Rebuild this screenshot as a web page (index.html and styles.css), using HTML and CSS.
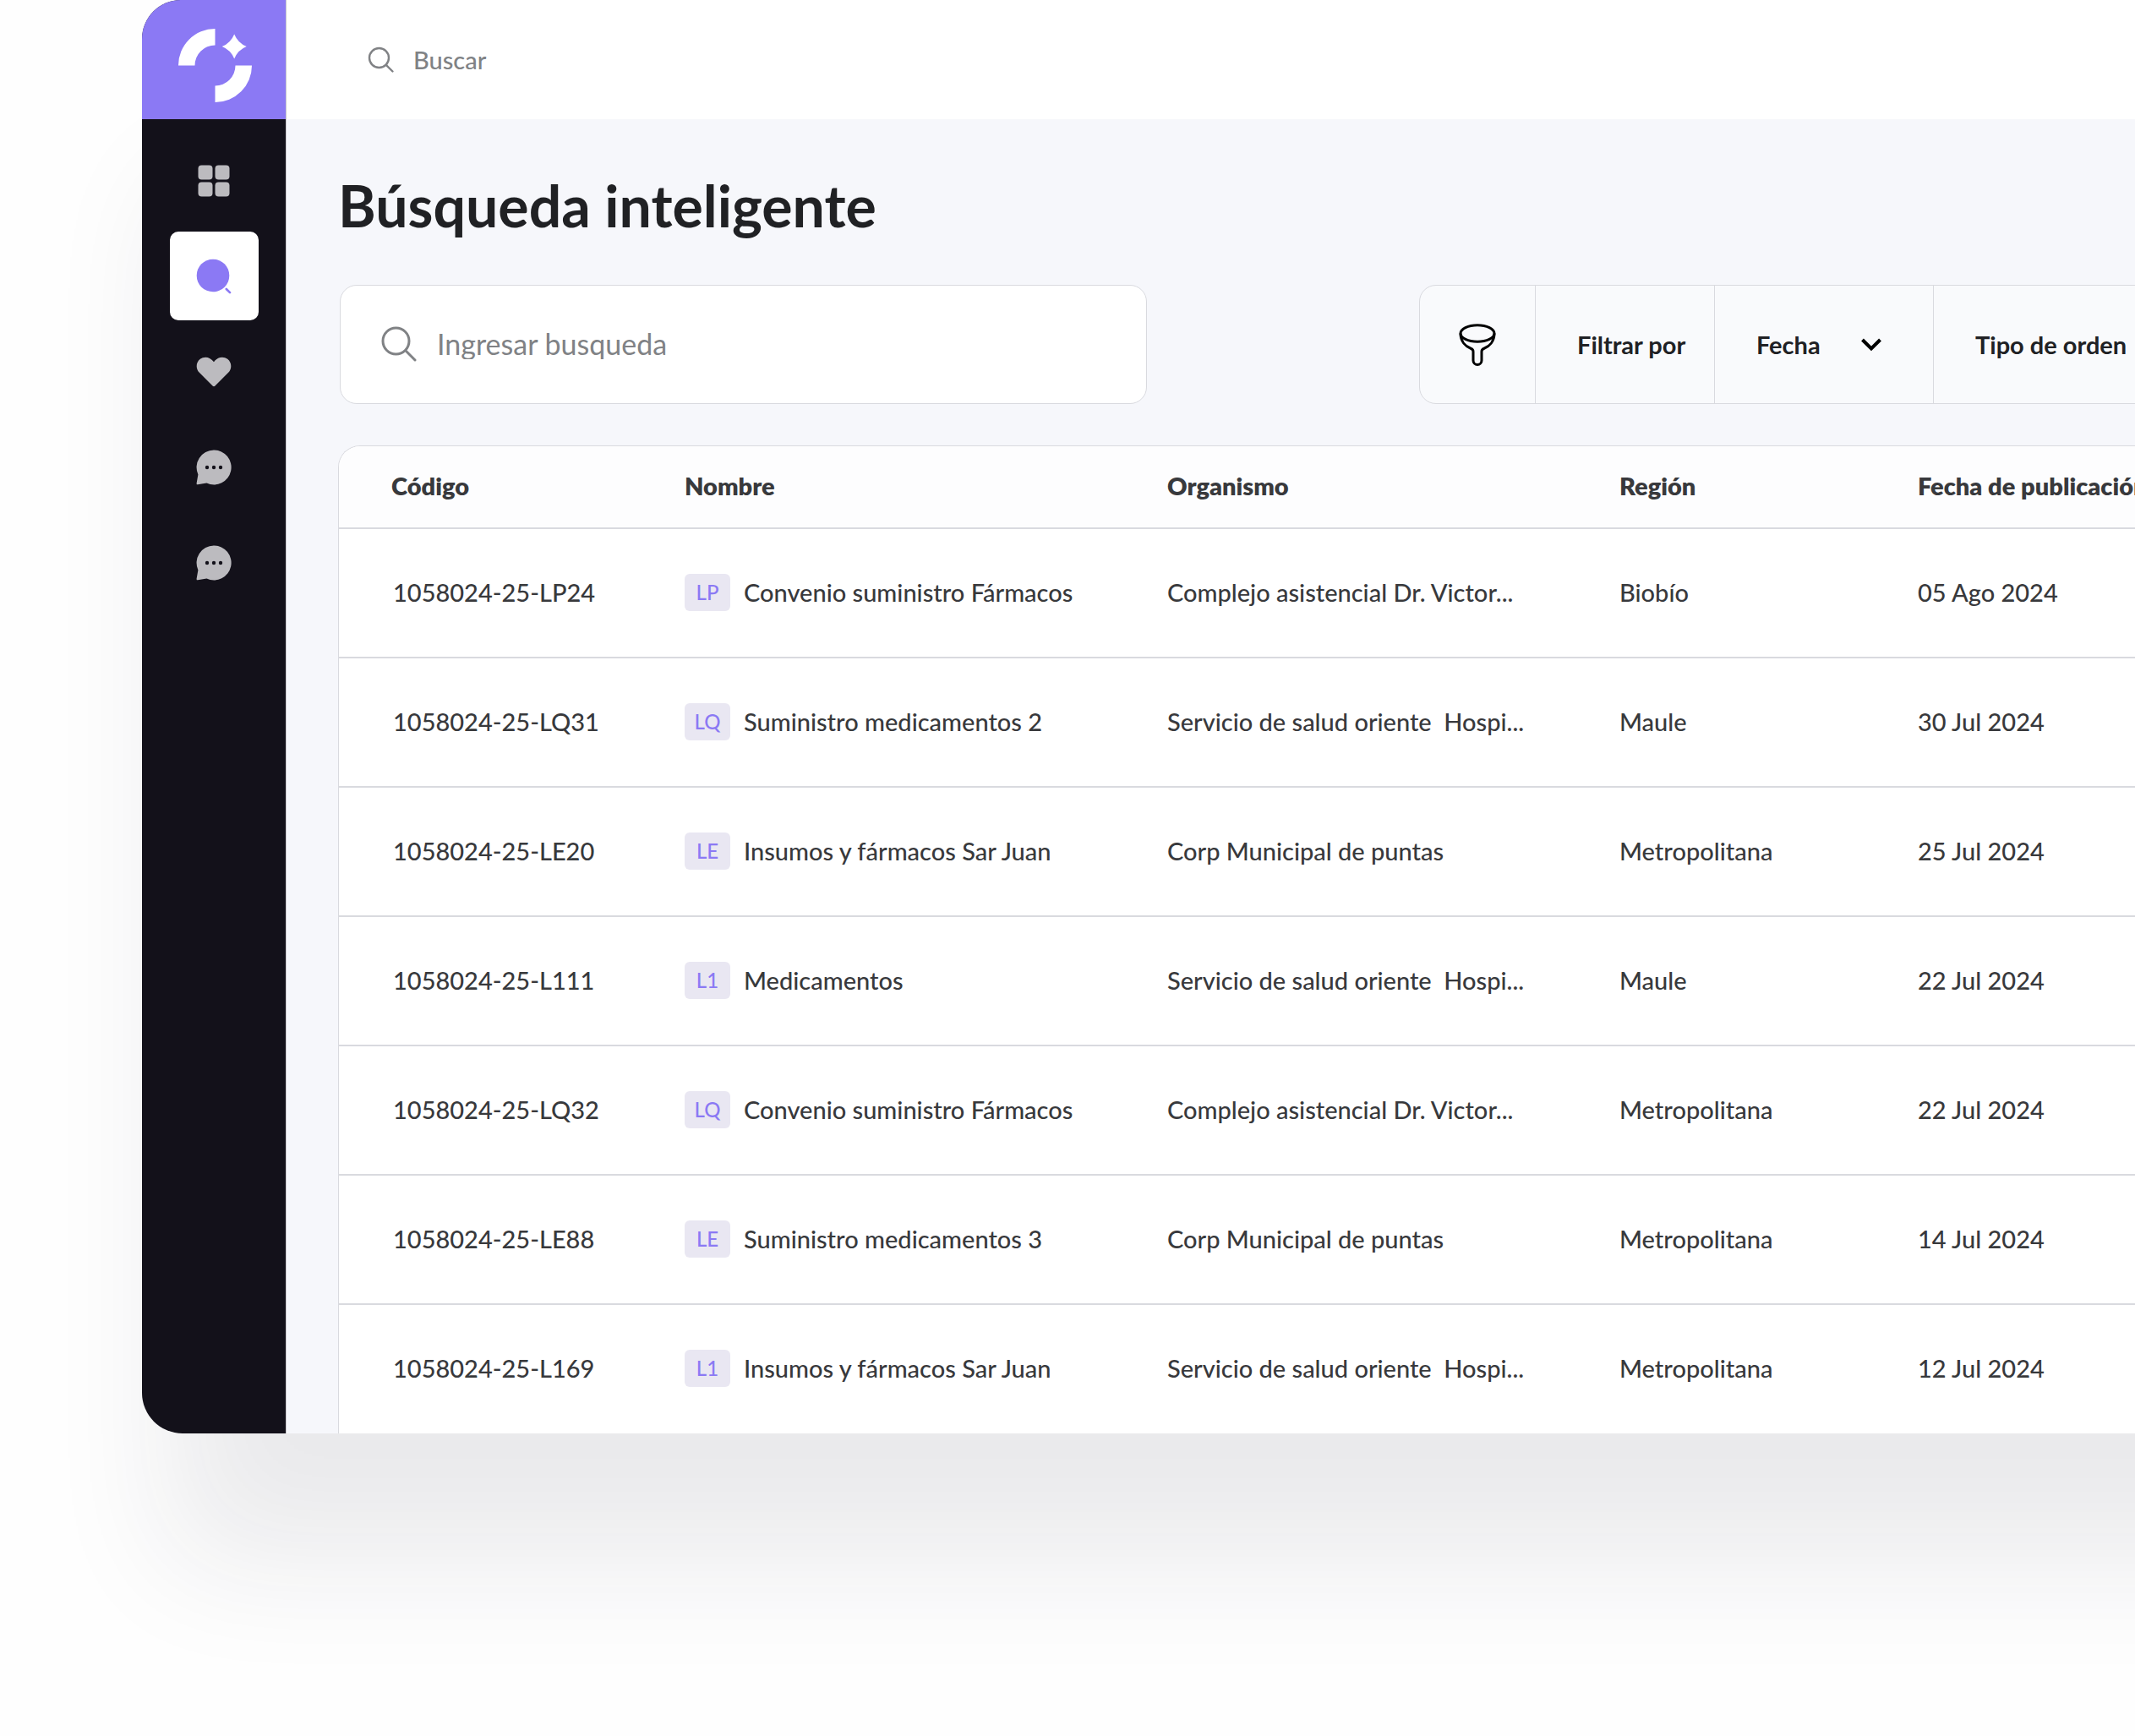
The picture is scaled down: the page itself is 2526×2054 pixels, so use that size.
FILE: index.html
```html
<!DOCTYPE html>
<html lang="es">
<head>
<meta charset="utf-8">
<meta name="viewport" content="width=device-width, initial-scale=1">
<title>Búsqueda inteligente</title>
<link rel="stylesheet" href="styles.css">
</head>
<body>
<div class="app">
  <aside class="sidebar">
    <a class="logo" href="#" aria-label="Inicio">
      <svg width="88" height="88" viewBox="0 0 88 88" fill="#fff" aria-hidden="true">
        <path d="M0 43.500A43.500 43.500 0 0 1 43.500 0V19.500A24 24 0 0 0 19.500 43.500Z"/>
        <path d="M87 43.500A43.500 43.500 0 0 1 43.500 87V67.500A24 24 0 0 0 67.500 43.500Z"/>
        <path d="M66.200 6.500Q70.500 17 80.700 21Q70.500 25 66.200 35.500Q61.900 25 51.700 21Q61.900 17 66.200 6.500Z"/>
      </svg>
    </a>
    <nav class="nav" aria-label="Principal">
      <a class="nav-item" href="#" aria-label="Panel">
        <svg width="42" height="42" viewBox="0 0 42 42" aria-hidden="true">
          <rect x="2.500" y="2.500" width="17" height="17" rx="4"/><rect x="22.500" y="2.500" width="17" height="17" rx="4"/>
          <rect x="2.500" y="22.500" width="17" height="17" rx="4"/><rect x="22.500" y="22.500" width="17" height="17" rx="4"/>
        </svg>
      </a>
      <a class="nav-item active" href="#" aria-label="Búsqueda" aria-current="page">
        <svg width="42" height="42" viewBox="0 0 42 42" aria-hidden="true">
          <circle cx="20" cy="20" r="19.300"/><path d="M35.800 36L40 40.200" stroke="currentColor" stroke-width="2.600" stroke-linecap="round"/>
        </svg>
      </a>
      <a class="nav-item" href="#" aria-label="Favoritos">
        <svg width="42" height="42" viewBox="0 0 42 42" aria-hidden="true">
          <path d="M21 9.300C16.800 3 9.500 2.200 4.800 5.800C-.5 10-.5 17.500 3.800 21.800L19.500 37.500Q21 39 22.500 37.500L38.200 21.800C42.500 17.500 42.500 10 37.200 5.800C32.500 2.200 25.200 3 21 9.300Z"/>
        </svg>
      </a>
      <a class="nav-item" href="#" aria-label="Mensajes">
        <svg width="42" height="42" viewBox="0 0 42 42" aria-hidden="true">
          <path d="M21 .5A20.500 20.500 0 1 1 12.500 39.600L2 41.300Q.4 41.400.6 39.800L2.400 29.500A20.500 20.500 0 0 1 21 .5Z"/>
          <g fill="#13111a"><circle cx="13" cy="21" r="2.200"/><circle cx="21" cy="21" r="2.200"/><circle cx="29" cy="21" r="2.200"/></g>
        </svg>
      </a>
      <a class="nav-item" href="#" aria-label="Chat">
        <svg width="42" height="42" viewBox="0 0 42 42" aria-hidden="true">
          <path d="M21 .5A20.500 20.500 0 1 1 12.500 39.600L2 41.300Q.4 41.400.6 39.800L2.400 29.500A20.500 20.500 0 0 1 21 .5Z"/>
          <g fill="#13111a"><circle cx="13" cy="21" r="2.200"/><circle cx="21" cy="21" r="2.200"/><circle cx="29" cy="21" r="2.200"/></g>
        </svg>
      </a>
    </nav>
  </aside>

  <div class="content">
    <header class="topbar">
      <label class="topbar-search">
        <svg width="32" height="32" viewBox="0 0 32 32" fill="none" stroke="currentColor" stroke-width="2.400" stroke-linecap="round" aria-hidden="true"><circle cx="13.500" cy="13.500" r="11.500"/><path d="M21.800 21.800L29.500 29.500"/></svg>
        <input class="field" type="search" placeholder="Buscar" aria-label="Buscar">
      </label>
    </header>

    <main class="main">
      <h1 class="title">Búsqueda inteligente</h1>

      <div class="toolbar">
        <label class="search-box">
          <svg width="42" height="42" viewBox="0 0 42 42" fill="none" stroke="currentColor" stroke-width="3" stroke-linecap="round" aria-hidden="true"><circle cx="17.500" cy="17.500" r="15.500"/><path d="M28.800 28.800L40 40"/></svg>
          <input class="field" type="search" placeholder="Ingresar busqueda" aria-label="Ingresar busqueda">
        </label>

        <div class="filters">
          <button class="filter filter-icon" type="button" aria-label="Filtros">
            <svg width="44" height="50" viewBox="0 0 44 50" fill="none" stroke="#000" stroke-width="3" stroke-linejoin="round" aria-hidden="true">
              <ellipse cx="22" cy="11.500" rx="20" ry="9.800"/>
              <path d="M2 11.500C2 21 8 27 14.500 29.500Q17 30.500 17 33V43.500A5 5 0 0 0 27 43.500V33Q27 30.500 29.500 29.500C36 27 42 21 42 11.500"/>
            </svg>
          </button>
          <div class="filter filter-label">Filtrar por</div>
          <div class="filter filter-date">
            <select class="select" aria-label="Fecha"><option>Fecha</option></select>
            <svg class="chevron" width="26" height="18" viewBox="0 0 26 18" fill="none" stroke="#000" stroke-width="4" aria-hidden="true"><path d="M2.500 3L13 13.500L23.500 3"/></svg>
          </div>
          <div class="filter filter-type">
            <select class="select" aria-label="Tipo de orden"><option>Tipo de orden</option></select>
            <svg class="chevron" width="26" height="18" viewBox="0 0 26 18" fill="none" stroke="#000" stroke-width="4" aria-hidden="true"><path d="M2.500 3L13 13.500L23.500 3"/></svg>
          </div>
        </div>
      </div>

      <div class="table-card">
        <table class="table">
          <colgroup><col class="col-code"><col class="col-name"><col class="col-org"><col class="col-region"><col></colgroup>
          <thead>
            <tr><th scope="col">Código</th><th scope="col">Nombre</th><th scope="col">Organismo</th><th scope="col">Región</th><th scope="col">Fecha de publicación</th></tr>
          </thead>
          <tbody>
            <tr><td>1058024-25-LP24</td><td><div class="name"><span class="badge">LP</span>Convenio suministro Fármacos</div></td><td>Complejo asistencial Dr. Victor...</td><td>Biobío</td><td>05 Ago 2024</td></tr>
            <tr><td>1058024-25-LQ31</td><td><div class="name"><span class="badge">LQ</span>Suministro medicamentos 2</div></td><td>Servicio de salud oriente&nbsp; Hospi...</td><td>Maule</td><td>30 Jul 2024</td></tr>
            <tr><td>1058024-25-LE20</td><td><div class="name"><span class="badge">LE</span>Insumos y fármacos Sar Juan</div></td><td>Corp Municipal de puntas</td><td>Metropolitana</td><td>25 Jul 2024</td></tr>
            <tr><td>1058024-25-L111</td><td><div class="name"><span class="badge">L1</span>Medicamentos</div></td><td>Servicio de salud oriente&nbsp; Hospi...</td><td>Maule</td><td>22 Jul 2024</td></tr>
            <tr><td>1058024-25-LQ32</td><td><div class="name"><span class="badge">LQ</span>Convenio suministro Fármacos</div></td><td>Complejo asistencial Dr. Victor...</td><td>Metropolitana</td><td>22 Jul 2024</td></tr>
            <tr><td>1058024-25-LE88</td><td><div class="name"><span class="badge">LE</span>Suministro medicamentos 3</div></td><td>Corp Municipal de puntas</td><td>Metropolitana</td><td>14 Jul 2024</td></tr>
            <tr><td>1058024-25-L169</td><td><div class="name"><span class="badge">L1</span>Insumos y fármacos Sar Juan</div></td><td>Servicio de salud oriente&nbsp; Hospi...</td><td>Metropolitana</td><td>12 Jul 2024</td></tr>
          </tbody>
        </table>
      </div>
    </main>
  </div>
</div>
</body>
</html>
```
FILE: styles.css
```css
:root {
  --violet: #8b79f4;
  --ink: #13111a;
  --text: #38393c;
  --muted: #808285;
  --line: #d9dadf;
  --surface: #f6f7fb;
}

* {
  box-sizing: border-box;
}

body {
  margin: 0;
  min-height: 100vh;
  overflow: hidden;
  background: #fefefe;
  color: var(--text);
  font: 500 29px/36px Lato, "Noto Sans", sans-serif;
}

/* The panel runs past the right edge of the window. */
.app {
  display: flex;
  margin: 0 -400px 0 168px;
  border-radius: 46px 0 0 48px;
  box-shadow: 0 185px 150px -35px rgba(30, 35, 60, 0.09);
}

.sidebar {
  flex: none;
  width: 170px;
  border-radius: 46px 0 0 48px;
  overflow: hidden;
  background: var(--ink);
}

.logo {
  display: flex;
  justify-content: center;
  align-items: center;
  height: 141px;
  padding: 14px 0 0 4px;
  background: var(--violet);
}

.nav {
  display: flex;
  flex-direction: column;
  align-items: center;
  gap: 8px;
  padding-top: 20px;
}

.nav-item {
  display: flex;
  justify-content: center;
  align-items: center;
  width: 105px;
  height: 105px;
  border-radius: 10px;
  color: #bcbbbf;
}

.nav-item svg {
  fill: currentColor;
}

.nav-item.active {
  background: #fff;
  color: var(--violet);
}

.content {
  flex: 1;
  min-width: 0;
  border-left: 1px solid #c9c9ce;
  background: var(--surface);
}

.topbar {
  display: flex;
  align-items: center;
  height: 141px;
  padding: 0 96px;
  background: #fff;
}

.topbar-search {
  display: flex;
  align-items: center;
  gap: 22px;
  color: var(--muted);
}

.field {
  flex: 1;
  min-width: 0;
  padding: 0;
  border: 0;
  outline: 0;
  background: none;
  color: var(--text);
  font: inherit;
}

.field::placeholder {
  color: var(--muted);
  opacity: 1;
}

.main {
  padding: 62px 0 0 61px;
}

.title {
  margin: 0;
  color: #202124;
  font-size: 68px;
  line-height: 80px;
  font-weight: 700;
}

.toolbar {
  display: flex;
  gap: 322px;
  padding: 54px 0 49px 2px;
}

.search-box {
  display: flex;
  align-items: center;
  gap: 24px;
  width: 955px;
  height: 141px;
  padding: 0 48px 2px;
  border: 1px solid var(--line);
  border-radius: 20px;
  background: #fff;
  color: var(--muted);
  font-size: 34px;
  font-weight: 400;
}

.filters {
  flex: 1;
  display: flex;
  height: 141px;
  border: 1px solid var(--line);
  border-radius: 20px;
  background: #f9fafc;
  color: #202124;
  font-weight: 700;
}

.filter {
  display: flex;
  align-items: center;
  padding: 0 49px;
  border-right: 1px solid var(--line);
  white-space: nowrap;
}

.filter-icon {
  justify-content: center;
  width: 137px;
  padding: 0;
  border-width: 0 1px 0 0;
  border-style: solid;
  border-color: var(--line);
  background: none;
}

.filter-label {
  width: 212px;
  padding-right: 0;
}

.filter-date,
.filter-type {
  display: grid;
}

.filter-date {
  width: 259px;
  padding-right: 60px;
}

.filter-type {
  flex: 1;
  border-right: 0;
}

.select,
.chevron {
  grid-area: 1 / 1;
}

.select {
  appearance: none;
  padding: 0;
  border: 0;
  background: none;
  color: inherit;
  font: inherit;
}

.chevron {
  justify-self: end;
  pointer-events: none;
}

.table-card {
  overflow: hidden;
  border: 1px solid var(--line);
  border-width: 1px 0 0 1px;
  border-radius: 26px 0 0 0;
  background: #fff;
}

.table {
  width: 100%;
  table-layout: fixed;
  border-collapse: separate;
  border-spacing: 0;
}

.col-code {
  width: 409px;
}

.col-name {
  width: 571px;
}

.col-org {
  width: 535px;
}

.col-region {
  width: 353px;
}

.table th,
.table td {
  padding: 0 0 2px;
  border-bottom: 2px solid var(--line);
  text-align: left;
  white-space: nowrap;
}

.table th {
  height: 98px;
  background: #fdfdfe;
  font-weight: 800;
}

.table td {
  height: 153px;
}

.table th:first-child {
  padding-left: 62px;
}

.table td:first-child {
  padding-left: 64px;
}

.table tbody tr:last-child td {
  height: 152px;
  border-bottom: 0;
}

.name {
  display: flex;
  align-items: center;
  gap: 16px;
}

.badge {
  display: flex;
  justify-content: center;
  align-items: center;
  width: 54px;
  height: 44px;
  border-radius: 6px;
  background: #e9e7f2;
  color: var(--violet);
  font-size: 24px;
}
```
